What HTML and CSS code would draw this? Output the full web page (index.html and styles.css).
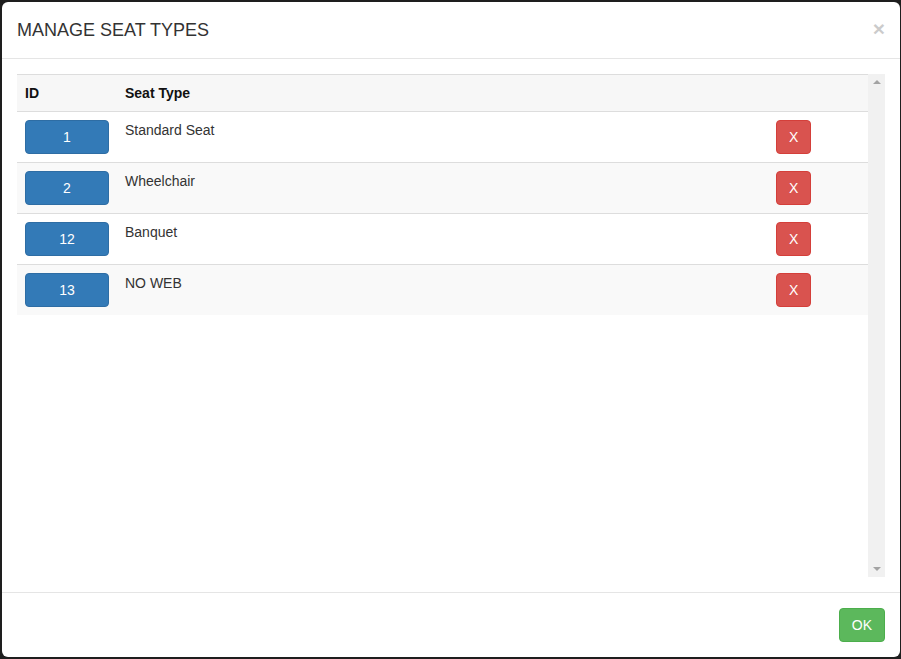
FILE: index.html
```html
<!DOCTYPE html>
<html lang="en">
  <head>
    <meta charset="UTF-8" />
    <meta name="viewport" content="width=device-width, initial-scale=1.0" />
    <title>Manage Seat Types</title>
    <link rel="stylesheet" href="styles.css">
  </head>
  <body>
    <div class="modal">
      <div class="modal-header">
        <h4 class="modal-title">MANAGE SEAT TYPES</h4>
        <button class="close" type="button">&times;</button>
      </div>

      <div class="modal-body">
        <div class="scroll-box">
          <div class="table-area">
            <table class="seat-table">
              <thead>
                <tr>
                  <th class="col-id">ID</th>
                  <th>Seat Type</th>
                  <th class="col-del"></th>
                </tr>
              </thead>
              <tbody>
                <tr>
                  <td><button class="btn btn-primary btn-id">1</button></td>
                  <td>Standard Seat</td>
                  <td><button class="btn btn-danger">X</button></td>
                </tr>
                <tr>
                  <td><button class="btn btn-primary btn-id">2</button></td>
                  <td>Wheelchair</td>
                  <td><button class="btn btn-danger">X</button></td>
                </tr>
                <tr>
                  <td><button class="btn btn-primary btn-id">12</button></td>
                  <td>Banquet</td>
                  <td><button class="btn btn-danger">X</button></td>
                </tr>
                <tr>
                  <td><button class="btn btn-primary btn-id">13</button></td>
                  <td>NO WEB</td>
                  <td><button class="btn btn-danger">X</button></td>
                </tr>
              </tbody>
            </table>
          </div>
          <div class="scrollbar">
            <span class="arrow-up"></span>
            <span class="arrow-down"></span>
          </div>
        </div>
      </div>

      <div class="modal-footer">
        <button class="btn btn-success">OK</button>
      </div>
    </div>
  </body>
</html>
```

FILE: styles.css
```css
body {
  font-family: "Liberation Sans", Arial, sans-serif;
  font-size: 14px;
  line-height: 20px;
  color: #333;
  margin: 0;
  padding: 0;
  background-color: #1e1e1e;
}

.modal {
  margin: 2px 1px 2px 2px;
  height: 655px;
  background-color: #fff;
  border-radius: 6px;
  display: flex;
  flex-direction: column;
  overflow: hidden;
}

.modal-header {
  padding: 15px;
  border-bottom: 1px solid #e5e5e5;
  display: flex;
  justify-content: space-between;
  align-items: flex-start;
}

.modal-title {
  margin: 0;
  font-size: 18px;
  font-weight: normal;
  line-height: 26px;
  color: #333;
}

.close {
  background: none;
  border: none;
  padding: 0;
  margin-top: 1px;
  font-family: "Liberation Sans", Arial, sans-serif;
  font-size: 21px;
  font-weight: bold;
  line-height: 21px;
  color: #000;
  opacity: 0.2;
  cursor: pointer;
}

.modal-body {
  flex: 1;
  padding: 15px;
  display: flex;
  flex-direction: column;
}

.scroll-box {
  flex: 1;
  display: flex;
}

.table-area {
  flex: 1;
}

.scrollbar {
  width: 17px;
  background-color: #f1f1f1;
  display: flex;
  flex-direction: column;
  justify-content: space-between;
  align-items: center;
  padding: 6px 0;
}

.arrow-up,
.arrow-down {
  width: 0;
  height: 0;
  border-left: 4px solid transparent;
  border-right: 4px solid transparent;
}

.arrow-up {
  border-bottom: 4px solid #a3a3a3;
}

.arrow-down {
  border-top: 4px solid #a3a3a3;
}

.seat-table {
  width: 100%;
  border-collapse: collapse;
}

.seat-table th,
.seat-table td {
  padding: 8px;
  line-height: 20px;
  text-align: left;
  vertical-align: top;
  border-top: 1px solid #ddd;
}

.seat-table th {
  font-weight: bold;
  border-bottom: 1px solid #ddd;
  background-color: #f7f7f7;
  color: #111;
}

.seat-table tbody tr:nth-child(even) td {
  background-color: #f9f9f9;
}

.col-id {
  width: 84px;
}

.col-del {
  width: 84px;
}

.btn {
  display: inline-block;
  padding: 6px 12px;
  font-family: "Liberation Sans", Arial, sans-serif;
  font-size: 14px;
  line-height: 20px;
  color: #fff;
  border: 1px solid transparent;
  border-radius: 4px;
  cursor: pointer;
}

.btn-primary {
  background-color: #337ab7;
  border-color: #2e6da4;
}

.btn-id {
  width: 84px;
}

.btn-danger {
  background-color: #d9534f;
  border-color: #d43f3a;
}

.btn-success {
  background-color: #5cb85c;
  border-color: #4cae4c;
}

.modal-footer {
  padding: 15px;
  border-top: 1px solid #e5e5e5;
  display: flex;
  justify-content: flex-end;
}
```
